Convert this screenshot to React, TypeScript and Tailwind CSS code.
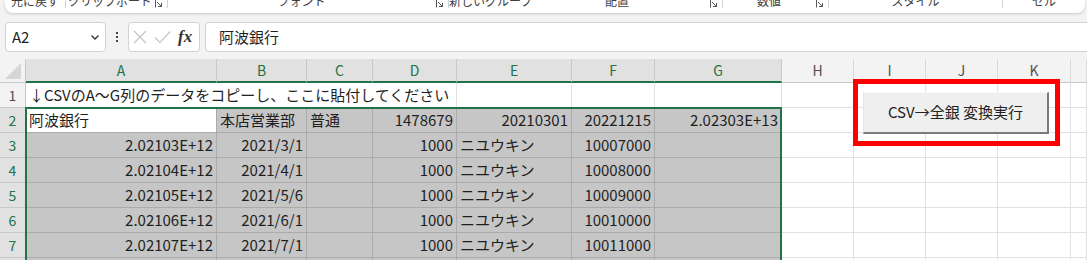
import React from "react";

// column template: row header, A..K, then the rest of L
const GRID =
  "grid grid-cols-[26px_191px_90px_66px_84px_115px_83px_127px_72px_72px_72px_73px_1fr]";

const COLS = ["A", "B", "C", "D", "E", "F", "G", "H", "I", "J", "K", "L"];

type Cell = { v: string; right?: boolean };

const ROWS: Cell[][] = [
  [
    { v: "阿波銀行" },
    { v: "本店営業部" },
    { v: "普通" },
    { v: "1478679", right: true },
    { v: "20210301", right: true },
    { v: "20221215", right: true },
    { v: "2.02303E+13", right: true },
  ],
  ...[
    ["2.02103E+12", "2021/3/1", "10007000"],
    ["2.02104E+12", "2021/4/1", "10008000"],
    ["2.02105E+12", "2021/5/6", "10009000"],
    ["2.02106E+12", "2021/6/1", "10010000"],
    ["2.02107E+12", "2021/7/1", "10011000"],
    ["2.02108E+12", "2021/8/2", "10012000"],
  ].map(([a, b, f]) => [
    { v: a, right: true },
    { v: b, right: true },
    { v: "" },
    { v: "1000", right: true },
    { v: "ニユウキン" },
    { v: f, right: true },
    { v: "" },
  ]),
];

const RIBBON = [
  { label: "元に戻す", w: "w-[61px]", launcher: false },
  { label: "クリップボード", w: "w-[102px]", launcher: true },
  { label: "フォント", w: "w-[281px]", launcher: true },
  { label: "新しいグループ", w: "w-[76px]", launcher: false },
  { label: "配置", w: "w-[198px]", launcher: true },
  { label: "数値", w: "w-[106px]", launcher: true },
  { label: "スタイル", w: "w-[174px]", launcher: false },
  { label: "セル", w: "flex-1", launcher: false },
];

const Launcher = () => (
  <svg width="9" height="9" viewBox="0 0 9 9" className="shrink-0 text-[#555]">
    <path d="M1.5 0v8.5M3 3l4.5 4.5M7.5 4v3.5H4" stroke="currentColor" fill="none" strokeWidth="1" />
  </svg>
);

const App: React.FC = () => {
  return (
    <div className="w-[1087px] h-[260px] overflow-hidden bg-[#f3f3f3] font-['Noto_Sans_CJK_JP',sans-serif] text-[#1f1f1f]">
      {/* ribbon bottom edge */}
      <div className="h-[20px]">
        <div className="ml-[5px] w-[1080px] h-[13px] bg-white rounded-b-[8px] shadow-[0_1px_3px_rgba(0,0,0,0.18)] flex overflow-hidden">
          {RIBBON.map((g, i) => (
            <div key={i} className={`${g.w} flex items-start`}>
              <div className="flex-1 flex justify-center">
                <span className="-mt-[5px] text-[12px] leading-[12px] text-[#404040] whitespace-nowrap">
                  {g.label}
                </span>
              </div>
              {g.launcher && (
                <div className="w-[13px] flex justify-start -mt-[1px]">
                  <Launcher />
                </div>
              )}
              {i < RIBBON.length - 1 && <div className="w-px h-[8px] bg-[#d4d4d4]" />}
            </div>
          ))}
        </div>
      </div>

      {/* formula bar */}
      <div className="mt-[2px] h-[30px] flex items-center">
        <div className="ml-[5px] w-[101px] h-[30px] bg-white border border-[#d1d1d1] rounded-[4px] flex items-center justify-between pl-[6px] pr-[5px]">
          <span className="text-[15px]">A2</span>
          <svg width="10" height="10" viewBox="0 0 10 10">
            <path d="M1.5 3.5L5 7l3.5-3.5" stroke="#333" strokeWidth="1.4" fill="none" />
          </svg>
        </div>
        <div className="w-[22px] flex flex-col items-center gap-[2px]">
          <div className="w-[2px] h-[2px] bg-[#444]" />
          <div className="w-[2px] h-[2px] bg-[#444]" />
          <div className="w-[2px] h-[2px] bg-[#444]" />
        </div>
        <div className="w-[72px] h-[30px] bg-white border border-[#d1d1d1] rounded-[4px] flex items-center pl-[4px] gap-[7px]">
          <svg width="14" height="14" viewBox="0 0 14 14">
            <path d="M1 1l12 12M13 1L1 13" stroke="#c4c4c4" strokeWidth="1.2" />
          </svg>
          <svg width="17" height="14" viewBox="0 0 17 14">
            <path d="M1 7.5l5 5L16 1.5" stroke="#c4c4c4" strokeWidth="1.2" fill="none" />
          </svg>
          <span className="font-['Liberation_Serif',serif] italic font-bold text-[17px] leading-none text-[#333] -mt-[2px]">
            fx
          </span>
        </div>
        <div className="ml-[5px] -mr-[10px] flex-1 h-[30px] bg-white border border-[#d1d1d1] rounded-[4px] flex items-center pl-[13px]">
          <span className="text-[15px]">阿波銀行</span>
        </div>
      </div>

      {/* sheet */}
      <div className="mt-[7px] relative bg-white">
        {/* column headers */}
        <div className={`${GRID} h-[24px]`}>
          <div className="bg-[#f3f3f3] border-r border-b border-[#c8c8c8] flex items-end justify-end pr-[4px] pb-[3px]">
            <svg width="16" height="16" viewBox="0 0 16 16">
              <path d="M16 0V16H0Z" fill="#d6d6d6" />
            </svg>
          </div>
          {COLS.map((c, i) =>
            i < 7 ? (
              <div
                key={c}
                className="bg-[#e1e1e1] border-r border-[#c8c8c8] border-b-2 border-b-[#217346] flex items-center justify-center text-[14px] text-[#217346]"
              >
                {c}
              </div>
            ) : (
              <div
                key={c}
                className="bg-[#f3f3f3] border-r border-[#dadada] border-b border-b-[#c8c8c8] flex items-center justify-center text-[14px] text-[#505050]"
              >
                {i < 11 ? c : ""}
              </div>
            )
          )}
        </div>

        {/* row 1 */}
        <div className={`${GRID} h-[25px]`}>
          <div className="bg-[#f3f3f3] border-r border-b border-[#c8c8c8] flex items-center justify-center text-[14px] text-[#505050]">
            1
          </div>
          <div className="col-span-4 border-r border-b border-[#e1e1e1] flex items-center px-[3px] text-[15px] whitespace-nowrap">
            ↓CSVのA～G列のデータをコピーし、ここに貼付してください
          </div>
          {COLS.slice(4).map((c) => (
            <div key={c} className="border-r border-b border-[#e1e1e1]" />
          ))}
        </div>

        {/* rows 2.. */}
        {ROWS.map((row, r) => (
          <div key={r} className={`${GRID} h-[25px]`}>
            <div className="bg-[#e1e1e1] border-r border-b border-[#c8c8c8] flex items-center justify-center text-[14px] text-[#217346]">
              {r + 2}
            </div>
            {row.map((cell, c) => (
              <div
                key={c}
                className={`border-r border-b border-[#ababab] flex items-center px-[3px] text-[15px] whitespace-nowrap overflow-hidden ${
                  r === 0 && c === 0 ? "bg-white" : "bg-[#c6c6c6]"
                } ${cell.right ? "justify-end" : "justify-start"}`}
              >
                {cell.v}
              </div>
            ))}
            {COLS.slice(7).map((c) => (
              <div key={c} className="border-r border-b border-[#e1e1e1]" />
            ))}
          </div>
        ))}

        {/* selection outline */}
        <div className="absolute left-[25px] top-[48px] w-[757px] h-[200px] border-2 border-[#217346] pointer-events-none" />

        {/* button with red frame */}
        <div className="absolute left-[853px] top-[20px] w-[207px] h-[67px] border-[5px] border-[#ff0000]" />
        <button className="absolute left-[863px] top-[33px] w-[186px] h-[42px] bg-[#efefef] border-t border-l border-t-[#f8f8f8] border-l-[#e4e4e4] border-r-2 border-b-2 border-r-[#7a7a7a] border-b-[#7a7a7a] text-[15px] text-[#222] flex items-center justify-center">
          CSV→全銀 変換実行
        </button>
      </div>
    </div>
  );
};

export default App;
